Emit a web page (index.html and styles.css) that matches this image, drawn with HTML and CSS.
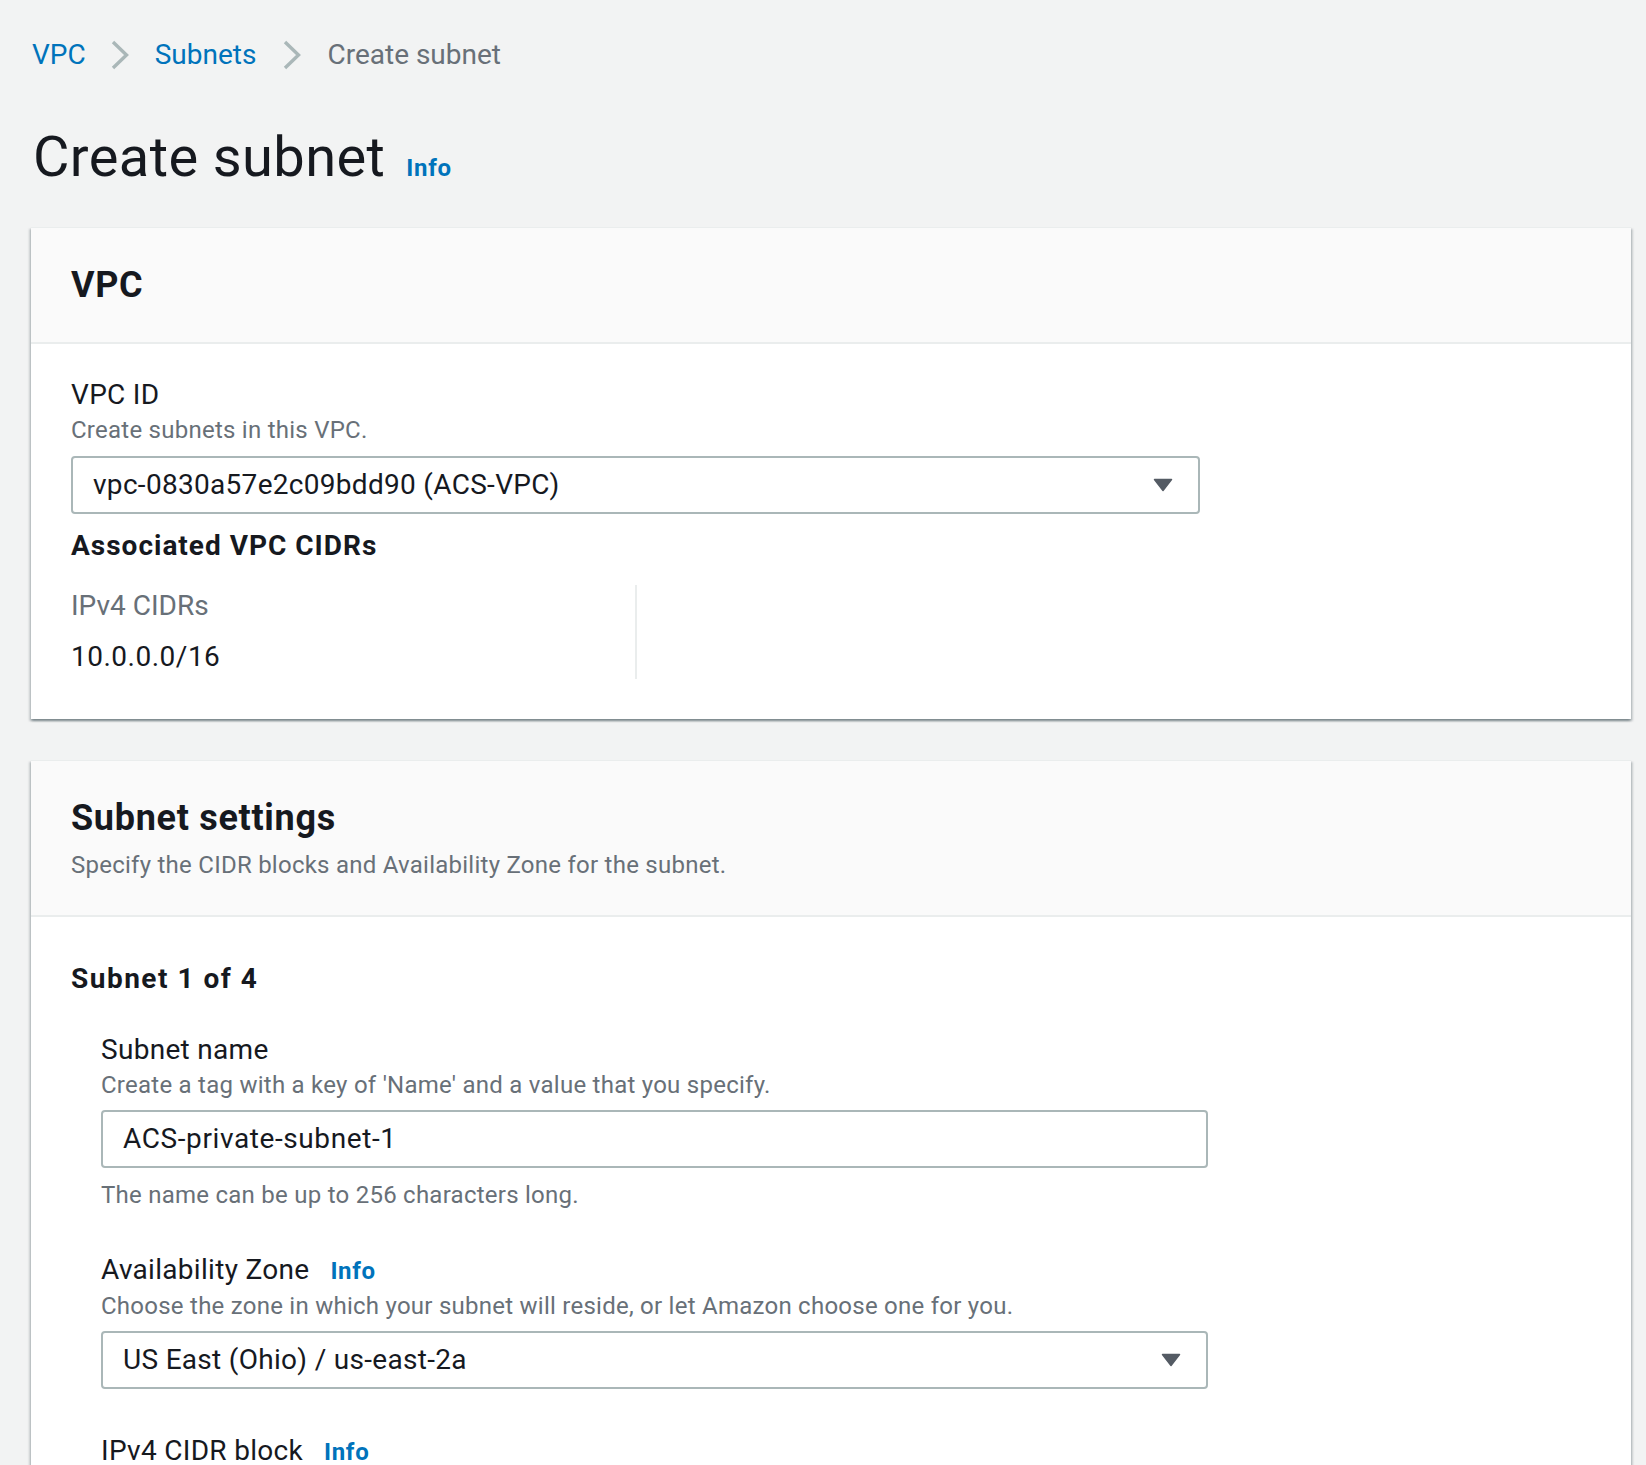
FILE: index.html
```html
<!DOCTYPE html>
<html lang="en">
<head>
<meta charset="utf-8">
<title>Create subnet</title>
<link rel="stylesheet" href="styles.css">
</head>
<body>
<div class="page">
  <nav class="breadcrumbs">
    <a class="crumb-link" href="#">VPC</a>
    <svg class="crumb-sep sep-first" width="18" height="30" viewBox="0 0 18 30"><polyline points="2,2 15.5,15 2,28" fill="none" stroke="#aab7b8" stroke-width="3.4"/></svg>
    <a class="crumb-link" href="#">Subnets</a>
    <svg class="crumb-sep" width="18" height="30" viewBox="0 0 18 30"><polyline points="2,2 15.5,15 2,28" fill="none" stroke="#aab7b8" stroke-width="3.4"/></svg>
    <span class="crumb-current">Create subnet</span>
  </nav>

  <div class="title-row">
    <h1 class="page-title">Create subnet</h1>
    <a class="info-link info-title" href="#">Info</a>
  </div>

  <section class="card card-vpc">
    <div class="card-header">
      <h2 class="card-title">VPC</h2>
    </div>
    <div class="card-body">
      <div class="field-label">VPC ID</div>
      <div class="field-desc">Create subnets in this VPC.</div>
      <div class="select select-wide">
        <span class="select-value">vpc-0830a57e2c09bdd90 (ACS-VPC)</span>
        <svg class="caret" width="20" height="14" viewBox="0 0 20 14"><path d="M1.5 1.5 H18.5 L10 12.5 Z" fill="#545b64" stroke="#545b64" stroke-width="1.5" stroke-linejoin="round"/></svg>
      </div>
      <h3 class="sub-heading">Associated VPC CIDRs</h3>
      <div class="kv-grid">
        <div class="kv-col">
          <div class="kv-key">IPv4 CIDRs</div>
          <div class="kv-value">10.0.0.0/16</div>
        </div>
        <div class="kv-col"></div>
      </div>
    </div>
  </section>

  <section class="card card-settings">
    <div class="card-header header-settings">
      <h2 class="card-title">Subnet settings</h2>
      <div class="header-desc">Specify the CIDR blocks and Availability Zone for the subnet.</div>
    </div>
    <div class="card-body body-settings">
      <h3 class="subnet-count">Subnet 1 of 4</h3>
      <div class="nested">
        <div class="field-label first-label">Subnet name</div>
        <div class="field-desc">Create a tag with a key of 'Name' and a value that you specify.</div>
        <div class="text-input">ACS-private-subnet-1</div>
        <div class="field-help">The name can be up to 256 characters long.</div>

        <div class="field-label label-row label-spaced"><span>Availability Zone</span><a class="info-link info-inline" href="#">Info</a></div>
        <div class="field-desc">Choose the zone in which your subnet will reside, or let Amazon choose one for you.</div>
        <div class="select select-nested">
          <span class="select-value">US East (Ohio) / us-east-2a</span>
          <svg class="caret" width="20" height="14" viewBox="0 0 20 14"><path d="M1.5 1.5 H18.5 L10 12.5 Z" fill="#545b64" stroke="#545b64" stroke-width="1.5" stroke-linejoin="round"/></svg>
        </div>

        <div class="field-label label-row label-cidr"><span>IPv4 CIDR block</span><a class="info-link info-inline" href="#">Info</a></div>
      </div>
    </div>
  </section>
</div>
</body>
</html>
```

FILE: styles.css
```css
html, body {
  margin: 0;
  padding: 0;
}

body {
  background: #f2f3f3;
  color: #16191f;
  font-family: Roboto, "Liberation Sans", Arial, sans-serif;
  font-size: 28px;
  line-height: 40px;
  letter-spacing: 0.3px;
}

.page {
  padding: 33px 15px 0 31px;
}

a {
  text-decoration: none;
}

/* breadcrumbs */
.breadcrumbs {
  display: flex;
  align-items: center;
  height: 44px;
  font-size: 28px;
  line-height: 44px;
  padding-left: 1px;
  letter-spacing: 0;
}

.crumb-link {
  color: #0073bb;
}

.crumb-sep {
  display: block;
  margin: 0 26px 0 27px;
}

.sep-first {
  margin-left: 25px;
}

.crumb-current {
  color: #687078;
}

/* title */
.title-row {
  display: flex;
  align-items: baseline;
  margin-top: 45px;
  padding-left: 2px;
}

.page-title {
  margin: 0;
  font-size: 56px;
  line-height: 70px;
  font-weight: 400;
  letter-spacing: 0.4px;
  color: #16191f;
}

.info-link {
  color: #0073bb;
  font-weight: 700;
  font-size: 24px;
  letter-spacing: 0.7px;
}

.info-title {
  margin-left: 21px;
}

.label-row {
  display: flex;
  align-items: baseline;
}

.info-inline {
  margin-left: 21px;
}

/* cards */
.card {
  background: #ffffff;
  border-top: 1px solid #eaeded;
  box-shadow: 0 2px 2px 0 rgba(0, 28, 36, 0.3), 2px 2px 2px 0 rgba(0, 28, 36, 0.15), -2px 2px 2px 0 rgba(0, 28, 36, 0.15);
}

.card-vpc {
  margin-top: 35px;
}

.card-settings {
  margin-top: 41px;
}

.card-header {
  background: #fafafa;
  padding: 35px 40px 35px;
  border-bottom: 2px solid #eaeded;
}

.header-settings {
  padding-bottom: 34px;
}

.card-title {
  margin: 0;
  font-size: 36px;
  line-height: 44px;
  font-weight: 700;
  letter-spacing: 0.7px;
  color: #16191f;
}

.header-desc {
  margin-top: 9px;
  font-size: 24px;
  line-height: 32px;
  letter-spacing: 0.25px;
  color: #687078;
}

.card-body {
  padding: 32px 40px 40px;
}

.body-settings {
  padding-top: 42px;
}

/* fields */
.field-label {
  font-size: 28px;
  line-height: 38px;
  color: #16191f;
}

.field-desc {
  font-size: 24px;
  line-height: 32px;
  letter-spacing: 0.25px;
  color: #687078;
}

.field-help {
  margin-top: 11px;
  font-size: 24px;
  line-height: 32px;
  letter-spacing: 0.25px;
  color: #687078;
}

.select {
  box-sizing: border-box;
  display: flex;
  align-items: center;
  justify-content: space-between;
  height: 58px;
  margin-top: 10px;
  padding: 0 25px 0 20px;
  border: 2px solid #aab7b8;
  border-radius: 4px;
  background: #ffffff;
  font-size: 28px;
  letter-spacing: 0.3px;
  color: #16191f;
}

.select-wide {
  width: 1129px;
}

.select-nested {
  width: 1107px;
  margin-top: 9px;
}

.caret {
  display: block;
  flex: none;
}

.text-input {
  box-sizing: border-box;
  width: 1107px;
  height: 58px;
  margin-top: 9px;
  padding: 0 20px;
  border: 2px solid #aab7b8;
  border-radius: 4px;
  display: flex;
  align-items: center;
  font-size: 28px;
  letter-spacing: 0.6px;
  color: #16191f;
}

.sub-heading {
  margin: 12px 0 0;
  font-size: 28px;
  line-height: 40px;
  font-weight: 700;
  letter-spacing: 1px;
}

.kv-grid {
  display: grid;
  grid-template-columns: 566px 1fr;
  margin-top: 19px;
}

.kv-col:first-child {
  border-right: 2px solid #eaeded;
}

.kv-key {
  font-size: 28px;
  line-height: 42px;
  letter-spacing: 0;
  color: #687078;
}

.kv-value {
  margin-top: 8px;
  font-size: 28px;
  line-height: 44px;
  letter-spacing: 0.5px;
  color: #16191f;
}

.subnet-count {
  margin: 0;
  font-size: 28px;
  line-height: 40px;
  font-weight: 700;
  letter-spacing: 1.5px;
}

.nested {
  margin-left: 30px;
}

.first-label {
  margin-top: 32px;
}

.label-spaced {
  margin-top: 40px;
}

.label-cidr {
  margin-top: 43px;
}
```
